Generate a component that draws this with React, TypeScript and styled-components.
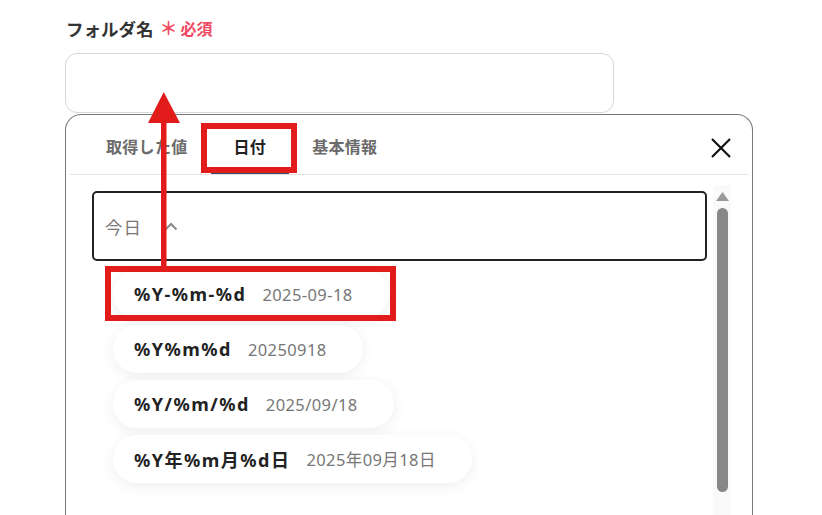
import React from "react";
import styled, { createGlobalStyle } from "styled-components";

const Global = createGlobalStyle`
  html, body { margin: 0; padding: 0; background: #fff; }
  body { font-family: "Noto Sans", "Noto Sans CJK JP", sans-serif; }
  * { box-sizing: border-box; }
`;

const Page = styled.div`
  position: relative;
  width: 822px;
  height: 515px;
  overflow: hidden;
  padding: 14px 0 0 65px;
  font-family: "Noto Sans", "Noto Sans CJK JP", sans-serif;
`;

const LabelRow = styled.div`
  display: flex;
  align-items: center;
  gap: 6px;
  height: 28px;
  padding-left: 1px;
  margin-bottom: 11px;
`;

const LabelText = styled.span`
  font-size: 17.5px;
  font-weight: 700;
  color: #333;
`;

const Required = styled.span`
  font-size: 16px;
  font-weight: 700;
  color: #f04a62;
  display: flex;
  align-items: center;
  gap: 3px;
`;

const Star = styled.span`
  font-size: 18px;
  line-height: 1;
`;

const TextInput = styled.div`
  width: 549px;
  height: 60px;
  border: 1px solid #d3d6dc;
  border-radius: 12px;
  background: #fff;
`;

const Panel = styled.div`
  margin-top: 1px;
  width: 688px;
  height: 420px;
  border: 1px solid #777;
  border-bottom: none;
  border-radius: 16px 16px 0 0;
  background: #fff;
`;

const TabBar = styled.div`
  display: flex;
  align-items: stretch;
  height: 60px;
  margin: 0 4px;
  padding-left: 13px;
  padding-right: 17px;
  border-bottom: 1px solid #e3e3e3;
`;

const Tab = styled.div<{ $active?: boolean }>`
  display: flex;
  align-items: center;
  padding: 0 23px;
  font-size: 16px;
  letter-spacing: 0.3px;
  font-weight: ${(p) => (p.$active ? 700 : 600)};
  color: ${(p) => (p.$active ? "#222" : "#6b6b6b")};
  box-shadow: ${(p) => (p.$active ? "inset 0 -2px 0 #2f4f73" : "none")};
  padding-top: 2px;
`;

const Close = styled.div`
  margin-left: auto;
  display: flex;
  align-items: center;
  padding-top: 6px;
`;

const Body = styled.div`
  display: flex;
  gap: 6px;
  padding: 10px 20px 0 26px;
`;

const Content = styled.div`
  width: 615px;
  padding-top: 6px;
`;

const SelectBox = styled.div`
  height: 70px;
  border: 2px solid #222;
  border-radius: 5px;
  display: flex;
  align-items: center;
  gap: 22px;
  padding-left: 11px;
`;

const SelectText = styled.span`
  font-size: 17.5px;
  color: #777;
  letter-spacing: 1px;
`;

const List = styled.div`
  display: flex;
  flex-direction: column;
  align-items: flex-start;
  gap: 7px;
  margin-top: 9px;
  padding-left: 21px;
`;

const Pill = styled.div`
  height: 48px;
  display: flex;
  align-items: center;
  gap: 16px;
  padding: 0 36px 0 21px;
  border-radius: 24px;
  background: #fff;
  box-shadow: 0 3px 14px rgba(0, 0, 0, 0.07);
`;

const Format = styled.span`
  font-size: 18px;
  font-weight: 700;
  color: #222;
  letter-spacing: 1.5px;
`;

const Sample = styled.span`
  font-size: 16.5px;
  color: #777;
  letter-spacing: 0.4px;
`;

const Scroll = styled.div`
  width: 18px;
  height: 340px;
  background: #fafafa;
  display: flex;
  flex-direction: column;
  align-items: center;
  padding-top: 7px;
`;

const Thumb = styled.div`
  margin-top: 7px;
  width: 11px;
  height: 284px;
  border-radius: 6px;
  background: #888;
`;

const RedBox = styled.div<{ $l: number; $t: number; $w: number; $h: number }>`
  position: absolute;
  left: ${(p) => p.$l}px;
  top: ${(p) => p.$t}px;
  width: ${(p) => p.$w}px;
  height: ${(p) => p.$h}px;
  border: 6px solid #e21b1b;
  pointer-events: none;
`;

const Overlay = styled.svg`
  position: absolute;
  left: 0;
  top: 0;
  pointer-events: none;
`;

const items = [
  { f: "%Y-%m-%d", s: "2025-09-18" },
  { f: "%Y%m%d", s: "20250918" },
  { f: "%Y/%m/%d", s: "2025/09/18" },
  { f: "%Y年%m月%d日", s: "2025年09月18日" },
];

export default function App() {
  return (
    <>
      <Global />
      <Page>
        <LabelRow>
          <LabelText>フォルダ名</LabelText>
          <Required>
            <Star>＊</Star>必須
          </Required>
        </LabelRow>
        <TextInput />
        <Panel>
          <TabBar>
            <Tab>取得した値</Tab>
            <Tab $active>日付</Tab>
            <Tab>基本情報</Tab>
            <Close>
              <svg width="20" height="20" viewBox="0 0 20 20">
                <path d="M1 1 L19 19 M19 1 L1 19" stroke="#111" strokeWidth="2.2" strokeLinecap="butt" />
              </svg>
            </Close>
          </TabBar>
          <Body>
            <Content>
              <SelectBox>
                <SelectText>今日</SelectText>
                <svg width="14" height="9" viewBox="0 0 14 9">
                  <path d="M1.5 7.5 L7 2 L12.5 7.5" fill="none" stroke="#8a8a8a" strokeWidth="2" />
                </svg>
              </SelectBox>
              <List>
                {items.map((it) => (
                  <Pill key={it.f}>
                    <Format>{it.f}</Format>
                    <Sample>{it.s}</Sample>
                  </Pill>
                ))}
              </List>
            </Content>
            <Scroll>
              <svg width="13" height="9" viewBox="0 0 13 9">
                <path d="M6.5 0 L13 9 L0 9 Z" fill="#999" />
              </svg>
              <Thumb />
            </Scroll>
          </Body>
        </Panel>
        <RedBox $l={201} $t={123} $w={96} $h={50} />
        <RedBox $l={105} $t={266} $w={291} $h={55} />
        <Overlay width="822" height="515" viewBox="0 0 822 515">
          <rect x="161" y="120" width="5.5" height="148" fill="#e21b1b" />
          <polygon points="148,123 163.75,92 180,123" fill="#e21b1b" />
        </Overlay>
      </Page>
    </>
  );
}
